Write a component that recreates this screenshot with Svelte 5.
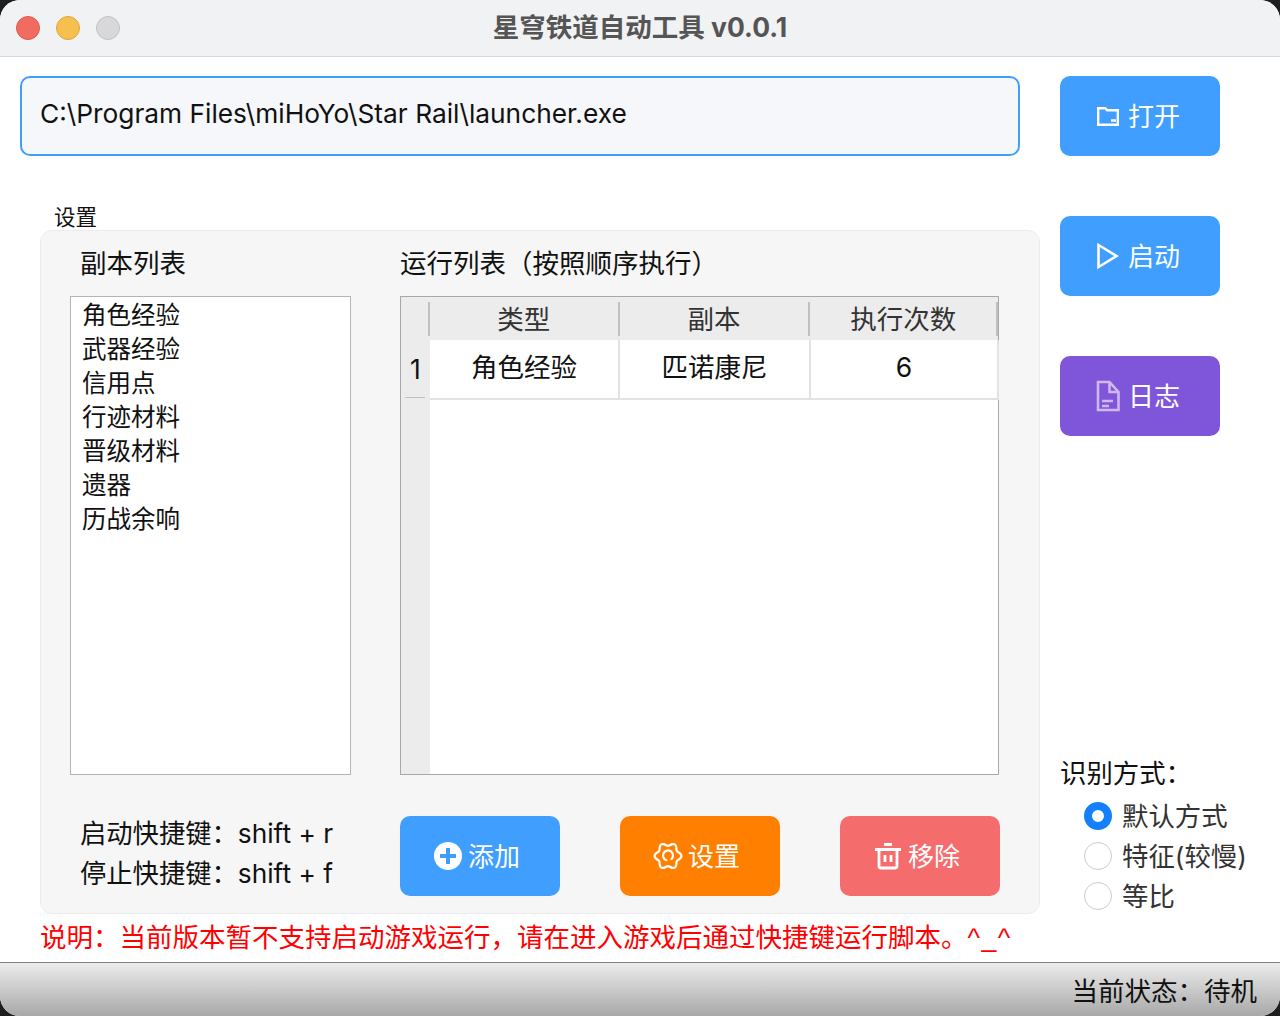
<script>
  const dungeons = ["角色经验", "武器经验", "信用点", "行迹材料", "晋级材料", "遗器", "历战余响"];
  const modes = ["默认方式", "特征(较慢)", "等比"];
  let mode = $state(modes[0]);

  // scalloped outline of the settings gear
  const gearPath = Array.from({ length: 73 }, (_, i) => {
    const a = (i * Math.PI) / 36 - Math.PI / 2;
    const r = 11.8 + 1.6 * Math.cos(6 * a);
    return `${i ? "L" : "M"}${(15 + r * Math.cos(a)).toFixed(2)} ${(15 + r * Math.sin(a)).toFixed(2)}`;
  }).join("") + "z";
</script>

<div class="window">
  <header class="titlebar">
    <div class="lights">
      <span class="light red"></span>
      <span class="light yellow"></span>
      <span class="light gray"></span>
    </div>
    <div class="title">星穹铁道自动工具 v0.0.1</div>
  </header>

  <main class="content">
    <div class="left">
      <input class="path" value="C:\Program Files\miHoYo\Star Rail\launcher.exe" />
      <div class="group-label">设置</div>
      <section class="panel">
        <div class="col-title">副本列表</div>
        <div class="col-title run-title">运行列表（按照顺序执行）</div>
        <ul class="list">
          {#each dungeons as d}
            <li>{d}</li>
          {/each}
        </ul>
        <div class="table">
          <div class="thead">
            <div class="corner"></div>
            <div class="th">类型</div>
            <div class="th">副本</div>
            <div class="th">执行次数</div>
          </div>
          <div class="tbody">
            <div class="rownums"><div class="rownum">1</div></div>
            <div class="rows">
              <div class="row">
                <div class="td">角色经验</div>
                <div class="td">匹诺康尼</div>
                <div class="td">6</div>
              </div>
            </div>
          </div>
        </div>
        <div class="keys">
          <div>启动快捷键：shift + r</div>
          <div>停止快捷键：shift + f</div>
        </div>
        <div class="actions">
          <button class="btn blue">
            <svg width="30" height="30" viewBox="0 0 30 30"><circle cx="15" cy="15" r="14" fill="#fff" /><path d="M15 7v16M7 15h16" stroke="#409eff" stroke-width="4" /></svg>
            添加
          </button>
          <button class="btn orange">
            <svg width="30" height="30" viewBox="0 0 30 30" fill="none" stroke="#fff" stroke-width="2.2" stroke-linejoin="round"><path d={gearPath} /><path d="M18.500 18a5 5 0 1 0-5 1.200" stroke-linecap="round" /></svg>
            设置
          </button>
          <button class="btn pink">
            <svg width="30" height="30" viewBox="0 0 30 30" fill="none" stroke="#fff" stroke-width="2.8"><path d="M2 8.500h26M11 3.500h8M6 8.500V25a2 2 0 0 0 2 2h14a2 2 0 0 0 2-2V8.500M12 14v7M18 14v7" /></svg>
            移除
          </button>
        </div>
      </section>
      <p class="note">说明：当前版本暂不支持启动游戏运行，请在进入游戏后通过快捷键运行脚本。<span class="smile">^_^</span></p>
    </div>

    <aside class="right">
      <button class="btn blue">
        <svg width="24" height="24" viewBox="0 0 24 24" fill="none" stroke="#fff" stroke-width="2.4"><path d="M2.200 4.200h7l2 2h10.600v14.600H2.200zM15 16.500h5" /></svg>
        打开
      </button>
      <button class="btn blue">
        <svg width="24" height="30" viewBox="0 0 24 30" fill="none" stroke="#fff" stroke-width="2.6"><path d="M2.500 4l18 11-18 11z" /></svg>
        启动
      </button>
      <button class="btn purple">
        <svg width="24" height="32" viewBox="0 0 24 32" fill="none" stroke="#cdb8f0" stroke-width="2.6"><path d="M2 2h11.500L22.500 12v18H2zM13.500 2v10h9M6 21h11M6 26h7" /></svg>
        日志
      </button>
      <div class="modes">
        <div class="modes-title">识别方式：</div>
        {#each modes as m}
          <label class="radio">
            <input type="radio" name="mode" value={m} bind:group={mode} />
            <span class="dot"></span>
            {m}
          </label>
        {/each}
      </div>
    </aside>
  </main>

  <footer class="status">当前状态：待机</footer>
</div>

<style>
  :global(body) {
    background: #1e1e1e;
    font-family: Inter, "Noto Sans CJK SC", sans-serif;
  }
  .window {
    height: 1016px;
    display: flex;
    flex-direction: column;
    background: #fff;
    border-radius: 20px;
    overflow: hidden;
    color: #111;
  }
  .titlebar {
    height: 57px;
    flex: none;
    box-sizing: border-box;
    padding-bottom: 6px;
    position: relative;
    display: flex;
    align-items: center;
    justify-content: center;
    background: #f1f2f4;
    border-bottom: 1px solid #d6d6d6;
  }
  .lights {
    position: absolute;
    left: 16px;
    top: 16px;
    display: flex;
    gap: 16px;
  }
  .light {
    width: 24px;
    height: 24px;
    box-sizing: border-box;
    border-radius: 50%;
    border: 1px solid;
  }
  .red { background: #f26b60; border-color: #dc5a50; }
  .yellow { background: #f6c04f; border-color: #dea440; }
  .gray { background: #d8d8da; border-color: #c2c2c4; }
  .title {
    font-size: 26.500px;
    font-weight: bold;
    color: #555;
  }
  .content {
    flex: 1;
    display: flex;
    padding: 19px 0 0 20px;
    min-height: 0;
  }
  .left {
    width: 1020px;
    flex: none;
  }
  .path {
    display: block;
    width: 1000px;
    height: 80px;
    box-sizing: border-box;
    padding: 0 18px 6px;
    background: #f5f7fb;
    border: 2px solid #409eff;
    border-radius: 10px;
    outline: none;
    font: 26.300px Inter, sans-serif;
    color: #111;
  }
  .group-label {
    margin: 48px 0 0 34px;
    height: 26px;
    font-size: 21.500px;
    line-height: 27px;
  }
  .panel {
    margin-left: 20px;
    width: 1000px;
    height: 684px;
    box-sizing: border-box;
    display: grid;
    grid-template-columns: 330px 600px;
    grid-template-rows: 65px 479px 120px;
    padding-left: 29px;
    background: #f6f6f6;
    border: 1px solid #ececec;
    border-radius: 12px;
    font-size: 26.500px;
  }
  .col-title {
    padding: 1px 0 0 10px;
    line-height: 62px;
  }
  .run-title {
    padding-left: 0;
  }
  .list {
    width: 281px;
    box-sizing: border-box;
    margin: 0;
    padding: 1px 0 0 11px;
    list-style: none;
    background: #fff;
    border: 1px solid #b4b4b4;
    font-size: 24.500px;
    line-height: 34px;
  }
  .table {
    width: 599px;
    box-sizing: border-box;
    display: flex;
    flex-direction: column;
    background: #fff;
    border: 1px solid #a8a8a8;
  }
  .thead {
    height: 43px;
    flex: none;
    display: flex;
    align-items: center;
    background: #ececec;
    color: #333;
  }
  .corner {
    width: 27px;
    height: 34px;
    border-right: 2px solid #c0c0c0;
  }
  .th {
    width: 188px;
    height: 34px;
    line-height: 34px;
    text-align: center;
    border-right: 2px solid #c0c0c0;
  }
  .th:nth-child(3) {
    width: 189px;
  }
  .th:last-child {
    width: 186px;
  }
  .tbody {
    flex: 1;
    display: flex;
  }
  .rownums {
    width: 27px;
    flex: none;
    background: #ececec;
  }
  .rownum {
    height: 58px;
    line-height: 58px;
    padding-left: 9px;
    position: relative;
  }
  .rownum::after {
    content: "";
    position: absolute;
    left: 4px;
    right: 3px;
    bottom: 0;
    height: 1px;
    background: #c0c0c0;
  }
  .rows {
    flex: 1;
    border-left: 2px solid #ececec;
  }
  .row {
    display: flex;
    height: 60px;
    box-sizing: border-box;
    border-bottom: 2px solid #e2e2e2;
  }
  .td {
    width: 188px;
    line-height: 55px;
    text-align: center;
    border-right: 2px solid #e2e2e2;
  }
  .td:nth-child(2) {
    width: 189px;
  }
  .td:last-child {
    width: 186px;
  }
  .keys {
    padding: 39px 0 0 10px;
    font-size: 26.300px;
    line-height: 40px;
  }
  .actions {
    padding-top: 41px;
    display: flex;
    justify-content: space-between;
  }
  .btn {
    width: 160px;
    height: 80px;
    flex: none;
    display: flex;
    align-items: center;
    justify-content: center;
    gap: 8px;
    padding: 0 4px 3px 0;
    border: none;
    border-radius: 10px;
    color: #fff;
    font: 26px Inter, "Noto Sans CJK SC", sans-serif;
  }
  .btn svg {
    margin-top: 3px;
  }
  .actions .btn {
    gap: 5px;
    padding-right: 7px;
  }
  .blue { background: #409eff; }
  .orange { background: #ff8000; }
  .pink { background: #f56c6c; }
  .purple { background: #7f56d9; }
  .note {
    margin: 7px 0 0 20px;
    font-size: 26.500px;
    line-height: 32px;
    color: #f00;
    white-space: nowrap;
  }
  .smile {
    font-family: "Liberation Sans", sans-serif;
    font-size: 26.670px;
    letter-spacing: 1.500px;
  }
  .right {
    margin-left: 20px;
    width: 200px;
    display: flex;
    flex-direction: column;
    gap: 60px;
  }
  .modes {
    margin-top: auto;
    padding-bottom: 48px;
    font-size: 26.400px;
  }
  .modes-title {
    line-height: 38px;
    margin-bottom: 2px;
  }
  .radio {
    display: flex;
    align-items: center;
    gap: 10px;
    height: 40px;
    padding-left: 24px;
    color: #333;
  }
  .radio input {
    display: none;
  }
  .dot {
    width: 28px;
    height: 28px;
    margin-top: 4px;
    box-sizing: border-box;
    border-radius: 50%;
    background: #fff;
    border: 1px solid #ccc;
  }
  .radio input:checked + .dot {
    border: 8px solid #1580fb;
  }
  .status {
    height: 54px;
    flex: none;
    box-sizing: border-box;
    padding-right: 23px;
    text-align: right;
    line-height: 56px;
    font-size: 26.500px;
    background: linear-gradient(#ececec, #a8a8a8);
    border-top: 1px solid #808080;
  }
</style>
